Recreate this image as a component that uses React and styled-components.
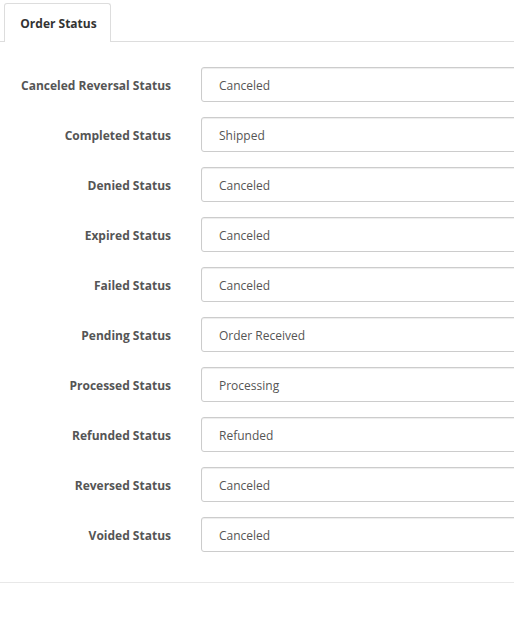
import React from "react";
import styled, { createGlobalStyle } from "styled-components";

const GlobalStyle = createGlobalStyle`
  html, body {
    margin: 0;
    padding: 0;
    background: #fff;
    overflow-x: hidden;
  }
  body {
    font-family: "Open Sans", "Liberation Sans", sans-serif;
    font-size: 12px;
    color: #555;
  }
`;

const Page = styled.div`
  width: 514px;
  overflow: hidden;
`;

const TabBar = styled.div`
  display: flex;
  padding: 3px 0 0 4px;
  border-bottom: 1px solid #ddd;
`;

const Tab = styled.div`
  width: 107px;
  height: 39px;
  box-sizing: border-box;
  display: flex;
  align-items: center;
  justify-content: center;
  border: 1px solid #ddd;
  border-bottom: none;
  border-radius: 3px 3px 0 0;
  margin-bottom: -1px;
  background: #fff;
  font-weight: 700;
  color: #333;
  padding: 1px 0 0 2px;
`;

const Form = styled.div`
  padding: 25px 0 30px;
  border-bottom: 1px solid #e8e8e8;
  display: flex;
  flex-direction: column;
  gap: 15px;
`;

const Row = styled.div`
  display: grid;
  grid-template-columns: 171px 400px;
  column-gap: 30px;
  align-items: center;
`;

const Label = styled.label`
  text-align: right;
  font-weight: 700;
  color: #555;
  padding-top: 2px;
`;

const Select = styled.div`
  height: 35px;
  box-sizing: border-box;
  border: 1px solid #ccc;
  border-radius: 3px;
  box-shadow: inset 0 1px 1px rgba(0, 0, 0, 0.075);
  display: flex;
  align-items: center;
  padding: 2px 0 0 17px;
  color: #555;
`;

const statuses = [
  ["Canceled Reversal Status", "Canceled"],
  ["Completed Status", "Shipped"],
  ["Denied Status", "Canceled"],
  ["Expired Status", "Canceled"],
  ["Failed Status", "Canceled"],
  ["Pending Status", "Order Received"],
  ["Processed Status", "Processing"],
  ["Refunded Status", "Refunded"],
  ["Reversed Status", "Canceled"],
  ["Voided Status", "Canceled"],
];

export default function App() {
  return (
    <Page>
      <GlobalStyle />
      <TabBar>
        <Tab>Order Status</Tab>
      </TabBar>
      <Form>
        {statuses.map(([label, value]) => (
          <Row key={label}>
            <Label>{label}</Label>
            <Select>{value}</Select>
          </Row>
        ))}
      </Form>
    </Page>
  );
}
